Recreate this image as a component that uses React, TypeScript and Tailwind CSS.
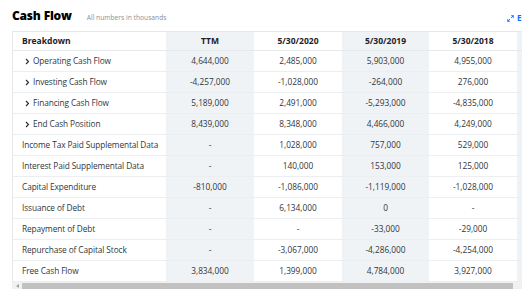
import React from 'react';

type Row = { label: string; expand?: boolean; values: string[] };

const rows: Row[] = [
  { label: 'Operating Cash Flow', expand: true, values: ['4,644,000', '2,485,000', '5,903,000', '4,955,000'] },
  { label: 'Investing Cash Flow', expand: true, values: ['-4,257,000', '-1,028,000', '-264,000', '276,000'] },
  { label: 'Financing Cash Flow', expand: true, values: ['5,189,000', '2,491,000', '-5,293,000', '-4,835,000'] },
  { label: 'End Cash Position', expand: true, values: ['8,439,000', '8,348,000', '4,466,000', '4,249,000'] },
  { label: 'Income Tax Paid Supplemental Data', values: ['-', '1,028,000', '757,000', '529,000'] },
  { label: 'Interest Paid Supplemental Data', values: ['-', '140,000', '153,000', '125,000'] },
  { label: 'Capital Expenditure', values: ['-810,000', '-1,086,000', '-1,119,000', '-1,028,000'] },
  { label: 'Issuance of Debt', values: ['-', '6,134,000', '0', '-'] },
  { label: 'Repayment of Debt', values: ['-', '-', '-33,000', '-29,000'] },
  { label: 'Repurchase of Capital Stock', values: ['-', '-3,067,000', '-4,286,000', '-4,254,000'] },
  { label: 'Free Cash Flow', values: ['3,834,000', '1,399,000', '4,784,000', '3,927,000'] },
];

const headers = ['TTM', '5/30/2020', '5/30/2019', '5/30/2018'];
const widths = ['w-[88px]', 'w-[88px]', 'w-[87px]', 'w-[88px]'];
const shade = (i: number) => (i % 2 === 0 ? 'bg-[#f0f3f5]' : 'bg-white');

function Chevron() {
  return (
    <svg width="5" height="7" viewBox="0 0 5 7" className="mr-[3px] shrink-0">
      <path d="M1 1l2.5 2.5L1 6" fill="none" stroke="#232a31" strokeWidth="1.1" />
    </svg>
  );
}

export default function App() {
  return (
    <div className="w-[522px] h-[289px] overflow-hidden bg-white font-['Open_Sans',sans-serif] text-[#232a31] relative">
      <div className="flex items-end h-[26px] pl-[12px] pr-0">
        <h2 className="text-[12px] leading-[20px] font-extrabold tracking-[-0.2px] text-black">Cash Flow</h2>
        <span className="ml-[15px] mb-[3px] text-[6.7px] leading-[10px] text-[#8b9095]">All numbers in thousands</span>
        <div className="ml-auto mb-[3px] flex items-center text-[#0f69ff] text-[8px] font-bold leading-[10px] whitespace-nowrap">
          <svg width="7" height="7" viewBox="0 0 10 10" className="mr-[3px]">
            <path d="M6 1h3v3M9 1L5.8 4.2M4 9H1V6M1 9l3.2-3.2" fill="none" stroke="#0f69ff" strokeWidth="1.3" />
          </svg>
          <span className="w-[5px] overflow-hidden">Expand All</span>
        </div>
      </div>
      <div className="ml-[12px] mt-[5px] w-[510px] overflow-hidden">
        <div className="w-[600px] border-l border-[#e6e9ec] border-t">
          <div className="flex h-[19px] border-b border-[#e6e9ec] text-[8.5px] font-bold text-[#1d2228]">
            <div className="w-[153px] shrink-0 flex items-center pl-[9px]">Breakdown</div>
            {headers.map((h, i) => (
              <div key={h} className={`${widths[i]} ${shade(i)} shrink-0 flex items-center justify-center`}>{h}</div>
            ))}
            <div className="w-[88px] bg-[#f0f3f5] shrink-0" />
          </div>
          {rows.map((r) => (
            <div key={r.label} className="flex h-[21px] border-b border-[#eceff2] text-[8.3px] text-[#30363c]">
              <div className={`w-[153px] shrink-0 flex items-center ${r.expand ? 'pl-[12px]' : 'pl-[9px]'} whitespace-nowrap tracking-[-0.1px]`}>
                {r.expand && <Chevron />}
                {r.label}
              </div>
              {r.values.map((v, i) => (
                <div key={i} className={`${widths[i]} ${shade(i)} shrink-0 flex items-center justify-center`}>{v}</div>
              ))}
              <div className="w-[88px] bg-[#f0f3f5] shrink-0" />
            </div>
          ))}
        </div>
        <div className="flex h-[7px] bg-[#f1f1f1] items-center">
          <div className="w-[10px] flex items-center justify-center">
            <svg width="3" height="4" viewBox="0 0 3 4"><path d="M3 0L0 2l3 2z" fill="#a3a3a3" /></svg>
          </div>
          <div className="w-[491px] h-[6px] bg-[#c1c1c1]" />
        </div>
      </div>
    </div>
  );
}
